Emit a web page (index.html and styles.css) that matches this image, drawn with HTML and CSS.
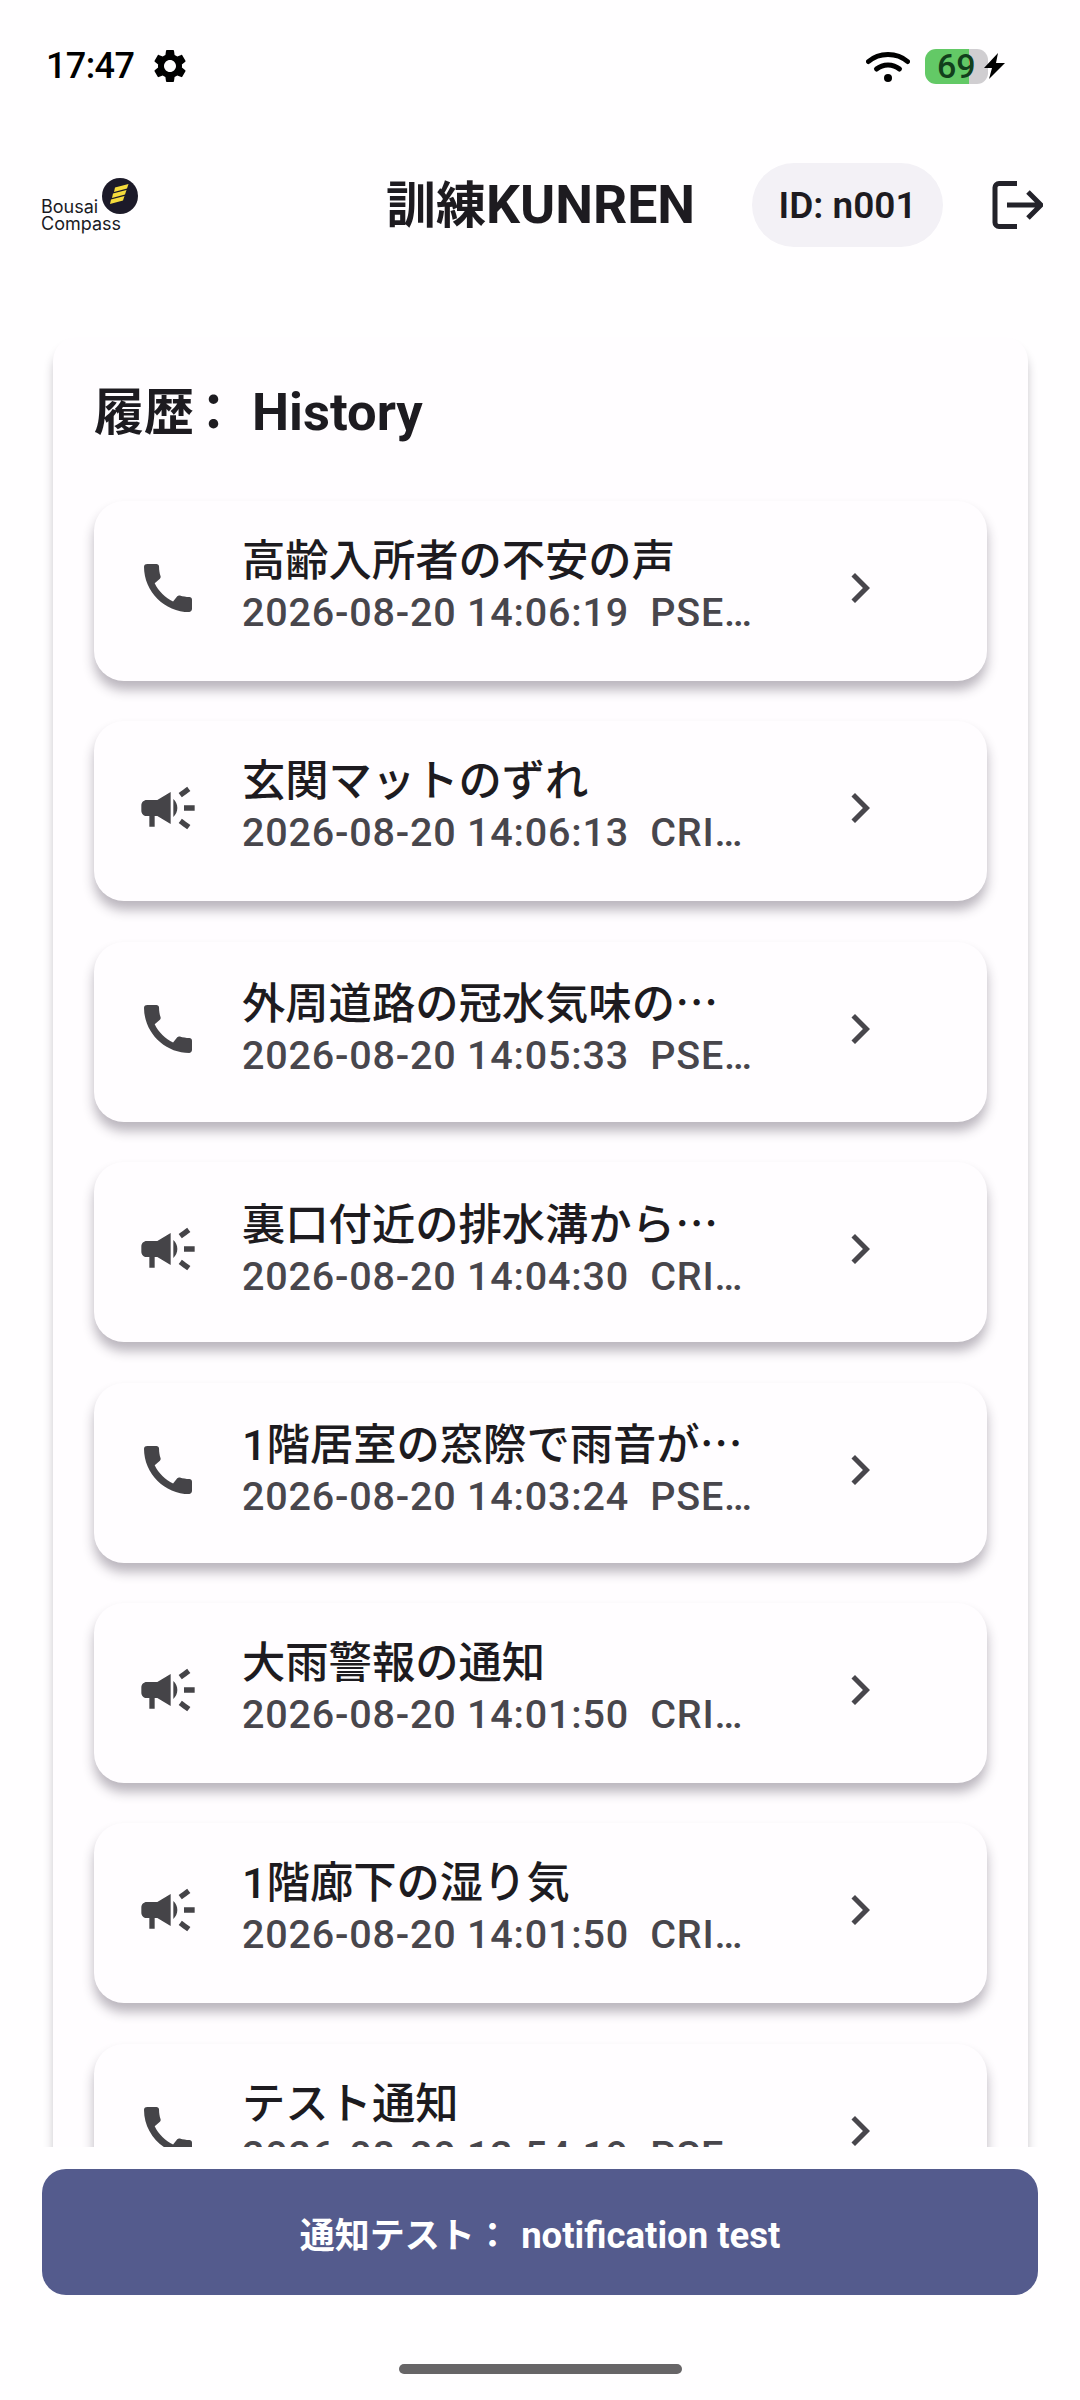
FILE: index.html
```html
<!DOCTYPE html>
<html lang="ja">
<head>
  <meta charset="UTF-8">
  <title>訓練KUNREN</title>
  <link rel="stylesheet" href="styles.css">
</head>
<body>
  <div class="screen">
    <div class="status-bar">
      <div class="status-left">
        <span class="clock">17:47</span>
        <svg class="gear" viewBox="0 0 24 24"><path d="M19.14 12.94c.04-.3.06-.61.06-.94 0-.32-.02-.64-.07-.94l2.03-1.58c.18-.14.23-.41.12-.61l-1.92-3.32c-.12-.22-.37-.29-.59-.22l-2.39.96c-.5-.38-1.03-.7-1.62-.94l-.36-2.54c-.04-.24-.24-.41-.48-.41h-3.84c-.24 0-.43.17-.47.41l-.36 2.54c-.59.24-1.13.57-1.62.94l-2.39-.96c-.22-.08-.47 0-.59.22L2.74 8.87c-.12.21-.08.47.12.61l2.03 1.58c-.05.3-.09.63-.09.94s.02.64.07.94l-2.03 1.58c-.18.14-.23.41-.12.61l1.92 3.32c.12.22.37.29.59.22l2.39-.96c.5.38 1.03.7 1.62.94l.36 2.54c.05.24.24.41.48.41h3.84c.24 0 .44-.17.47-.41l.36-2.54c.59-.24 1.13-.56 1.62-.94l2.39.96c.22.08.47 0 .59-.22l1.92-3.32c.12-.22.07-.47-.12-.61l-2.01-1.58zM12 15.6c-1.98 0-3.6-1.62-3.6-3.6s1.62-3.6 3.6-3.6 3.6 1.62 3.6 3.6-1.62 3.6-3.6 3.6z"/></svg>
      </div>
      <div class="status-right">
        <svg class="wifi" viewBox="0 0 44 32" fill="none" stroke="#000" stroke-width="5" stroke-linecap="round">
          <path d="M2.5 11.5C13 2 31 2 41.5 11.5"/>
          <path d="M10.5 19c6.500-5.500 16.500-5.500 23 0"/>
          <circle cx="22" cy="28" r="4" fill="#000" stroke="none"/>
        </svg>
        <div class="battery"><span class="battery-level">69</span></div>
        <svg class="bolt" viewBox="0 0 21 26"><path d="M14 0 0 15h8L5 26 21 10h-9z"/></svg>
      </div>
    </div>

    <header class="app-header">
      <div class="logo">
        <div class="logo-top">
          <span>Bousai</span>
          <svg class="logo-mark" viewBox="0 0 36 36">
            <circle cx="18" cy="18" r="18" fill="#1c1a29"/>
            <path d="M13 9.500 26.500 6 25 10.500 12 14zM11 15.500 24.500 12 23 16.500 10 20zM9 21.500 22.500 18 21 22.500 8 26z" fill="#f5dc3c"/>
          </svg>
        </div>
        <span class="logo-bottom">Compass</span>
      </div>
      <h1 class="app-title">訓練<span class="latin">KUNREN</span></h1>
      <div class="id-pill">ID: n001</div>
      <svg class="logout" viewBox="0 0 52 48" fill="none" stroke="#23222a" stroke-width="5">
        <path d="M26 2.500H8a4 4 0 0 0-4 4v35a4 4 0 0 0 4 4h18"/>
        <path d="M16 24h33M37 11l13 13-13 13"/>
      </svg>
    </header>

    <main class="scroll-area">
      <section class="history">
        <h2 class="history-title">履歴<span class="colon">：</span><span class="latin">History</span></h2>
        <div class="history-list">
          <div class="item">
            <svg class="item-icon" viewBox="0 0 24 24"><path d="M20.01 15.38c-1.23 0-2.42-.2-3.53-.56-.35-.12-.74-.03-1.01.24l-1.57 1.97c-2.83-1.35-5.48-3.9-6.89-6.83l1.95-1.66c.27-.28.35-.67.24-1.02-.37-1.11-.56-2.3-.56-3.53 0-.54-.45-.99-.99-.99H4.19C3.65 3 3 3.24 3 3.99 3 13.28 10.73 21 20.01 21c.71 0 .99-.63.99-1.18v-3.45c0-.54-.45-.99-.99-.99z"/></svg>
            <div class="item-text">
              <div class="item-title">高齢入所者の不安の声</div>
              <div class="item-sub">2026-08-20 14:06:19  PSE…</div>
            </div>
            <svg class="chevron" viewBox="0 0 24 24"><path d="M10 6 8.590 7.410 13.170 12l-4.580 4.590L10 18l6-6z"/></svg>
          </div>
          <div class="item">
            <svg class="item-icon" viewBox="0 0 24 24"><path d="M18 11v2h4v-2h-4zm-2 6.610c.96.71 2.210 1.650 3.200 2.390.4-.53.8-1.070 1.200-1.600-.99-.74-2.240-1.680-3.200-2.400-.4.54-.8 1.080-1.200 1.610zM20.400 5.600c-.4-.53-.8-1.070-1.200-1.600-.99.74-2.240 1.680-3.200 2.400.4.53.8 1.070 1.200 1.600.96-.72 2.210-1.650 3.200-2.400zM4 9c-1.100 0-2 .9-2 2v2c0 1.100.9 2 2 2h1v4h2v-4h1l5 3V6L8 9H4zm11.500 3c0-1.330-.58-2.530-1.500-3.350v6.690c.92-.81 1.500-2.010 1.500-3.340z"/></svg>
            <div class="item-text">
              <div class="item-title">玄関マットのずれ</div>
              <div class="item-sub">2026-08-20 14:06:13  CRI…</div>
            </div>
            <svg class="chevron" viewBox="0 0 24 24"><path d="M10 6 8.590 7.410 13.170 12l-4.580 4.590L10 18l6-6z"/></svg>
          </div>
          <div class="item">
            <svg class="item-icon" viewBox="0 0 24 24"><path d="M20.01 15.38c-1.23 0-2.42-.2-3.53-.56-.35-.12-.74-.03-1.01.24l-1.57 1.97c-2.83-1.35-5.48-3.9-6.89-6.83l1.95-1.66c.27-.28.35-.67.24-1.02-.37-1.11-.56-2.3-.56-3.53 0-.54-.45-.99-.99-.99H4.19C3.65 3 3 3.24 3 3.99 3 13.28 10.73 21 20.01 21c.71 0 .99-.63.99-1.18v-3.45c0-.54-.45-.99-.99-.99z"/></svg>
            <div class="item-text">
              <div class="item-title">外周道路の冠水気味の<span class="cjk">…</span></div>
              <div class="item-sub">2026-08-20 14:05:33  PSE…</div>
            </div>
            <svg class="chevron" viewBox="0 0 24 24"><path d="M10 6 8.590 7.410 13.170 12l-4.580 4.590L10 18l6-6z"/></svg>
          </div>
          <div class="item">
            <svg class="item-icon" viewBox="0 0 24 24"><path d="M18 11v2h4v-2h-4zm-2 6.610c.96.71 2.210 1.650 3.200 2.390.4-.53.8-1.070 1.200-1.600-.99-.74-2.240-1.680-3.200-2.400-.4.54-.8 1.080-1.200 1.610zM20.400 5.600c-.4-.53-.8-1.070-1.200-1.600-.99.74-2.240 1.680-3.200 2.400.4.53.8 1.070 1.200 1.600.96-.72 2.210-1.650 3.200-2.400zM4 9c-1.100 0-2 .9-2 2v2c0 1.100.9 2 2 2h1v4h2v-4h1l5 3V6L8 9H4zm11.500 3c0-1.330-.58-2.530-1.500-3.350v6.690c.92-.81 1.500-2.010 1.500-3.340z"/></svg>
            <div class="item-text">
              <div class="item-title">裏口付近の排水溝から<span class="cjk">…</span></div>
              <div class="item-sub">2026-08-20 14:04:30  CRI…</div>
            </div>
            <svg class="chevron" viewBox="0 0 24 24"><path d="M10 6 8.590 7.410 13.170 12l-4.580 4.590L10 18l6-6z"/></svg>
          </div>
          <div class="item">
            <svg class="item-icon" viewBox="0 0 24 24"><path d="M20.01 15.38c-1.23 0-2.42-.2-3.53-.56-.35-.12-.74-.03-1.01.24l-1.57 1.97c-2.83-1.35-5.48-3.9-6.89-6.83l1.95-1.66c.27-.28.35-.67.24-1.02-.37-1.11-.56-2.3-.56-3.53 0-.54-.45-.99-.99-.99H4.19C3.65 3 3 3.24 3 3.99 3 13.28 10.73 21 20.01 21c.71 0 .99-.63.99-1.18v-3.45c0-.54-.45-.99-.99-.99z"/></svg>
            <div class="item-text">
              <div class="item-title">1階居室の窓際で雨音が<span class="cjk">…</span></div>
              <div class="item-sub">2026-08-20 14:03:24  PSE…</div>
            </div>
            <svg class="chevron" viewBox="0 0 24 24"><path d="M10 6 8.590 7.410 13.170 12l-4.580 4.590L10 18l6-6z"/></svg>
          </div>
          <div class="item">
            <svg class="item-icon" viewBox="0 0 24 24"><path d="M18 11v2h4v-2h-4zm-2 6.610c.96.71 2.210 1.650 3.200 2.390.4-.53.8-1.070 1.200-1.600-.99-.74-2.240-1.680-3.200-2.400-.4.54-.8 1.080-1.200 1.610zM20.400 5.600c-.4-.53-.8-1.070-1.200-1.600-.99.74-2.240 1.680-3.200 2.400.4.53.8 1.070 1.200 1.600.96-.72 2.210-1.650 3.200-2.400zM4 9c-1.100 0-2 .9-2 2v2c0 1.100.9 2 2 2h1v4h2v-4h1l5 3V6L8 9H4zm11.500 3c0-1.330-.58-2.530-1.500-3.350v6.690c.92-.81 1.500-2.010 1.500-3.340z"/></svg>
            <div class="item-text">
              <div class="item-title">大雨警報の通知</div>
              <div class="item-sub">2026-08-20 14:01:50  CRI…</div>
            </div>
            <svg class="chevron" viewBox="0 0 24 24"><path d="M10 6 8.590 7.410 13.170 12l-4.580 4.590L10 18l6-6z"/></svg>
          </div>
          <div class="item">
            <svg class="item-icon" viewBox="0 0 24 24"><path d="M18 11v2h4v-2h-4zm-2 6.610c.96.71 2.210 1.650 3.200 2.390.4-.53.8-1.070 1.200-1.600-.99-.74-2.240-1.680-3.200-2.400-.4.54-.8 1.080-1.200 1.610zM20.400 5.600c-.4-.53-.8-1.070-1.200-1.600-.99.74-2.240 1.680-3.200 2.400.4.53.8 1.070 1.200 1.600.96-.72 2.210-1.650 3.200-2.400zM4 9c-1.100 0-2 .9-2 2v2c0 1.100.9 2 2 2h1v4h2v-4h1l5 3V6L8 9H4zm11.500 3c0-1.330-.58-2.530-1.500-3.350v6.690c.92-.81 1.500-2.010 1.500-3.340z"/></svg>
            <div class="item-text">
              <div class="item-title">1階廊下の湿り気</div>
              <div class="item-sub">2026-08-20 14:01:50  CRI…</div>
            </div>
            <svg class="chevron" viewBox="0 0 24 24"><path d="M10 6 8.590 7.410 13.170 12l-4.580 4.590L10 18l6-6z"/></svg>
          </div>
          <div class="item">
            <svg class="item-icon" viewBox="0 0 24 24"><path d="M20.01 15.38c-1.23 0-2.42-.2-3.53-.56-.35-.12-.74-.03-1.01.24l-1.57 1.97c-2.83-1.35-5.48-3.9-6.89-6.83l1.95-1.66c.27-.28.35-.67.24-1.02-.37-1.11-.56-2.3-.56-3.53 0-.54-.45-.99-.99-.99H4.19C3.65 3 3 3.24 3 3.99 3 13.28 10.73 21 20.01 21c.71 0 .99-.63.99-1.18v-3.45c0-.54-.45-.99-.99-.99z"/></svg>
            <div class="item-text">
              <div class="item-title">テスト通知</div>
              <div class="item-sub">2026-08-20 13:54:19  PSE…</div>
            </div>
            <svg class="chevron" viewBox="0 0 24 24"><path d="M10 6 8.590 7.410 13.170 12l-4.580 4.590L10 18l6-6z"/></svg>
          </div>
        </div>
      </section>
    </main>

    <footer class="app-footer">
      <button class="test-button">通知テスト<span class="colon">：</span><span class="latin">notification test</span></button>
    </footer>
    <div class="home-bar"></div>
  </div>
</body>
</html>
```

FILE: styles.css
```css
* {
  box-sizing: border-box;
}
body {
  margin: 0;
  background: #fffeff;
  font-family: Roboto, "Noto Sans CJK JP", sans-serif;
  color: #1d1b20;
}
.screen {
  width: 1080px;
  height: 2400px;
  display: flex;
  flex-direction: column;
  overflow: hidden;
}
.cjk {
  font-family: "Noto Sans CJK JP", sans-serif;
}
.colon {
  font-feature-settings: "palt";
}

/* status bar */
.status-bar {
  height: 132px;
  flex: none;
  display: flex;
  justify-content: space-between;
  padding: 48px 75px 0 46px;
}
.status-left {
  display: flex;
  align-items: center;
  gap: 16px;
  height: 36px;
}
.clock {
  font-size: 36px;
  font-weight: 500;
  letter-spacing: -0.6px;
  color: #000;
}
.gear {
  width: 40px;
  height: 40px;
}
.status-right {
  display: flex;
  align-items: center;
  height: 36px;
}
.wifi {
  width: 44px;
  height: 32px;
  margin-right: 15px;
}
.battery {
  width: 63px;
  height: 35px;
  border-radius: 11px;
  background: linear-gradient(90deg, #63c966 70%, #d0ced1 70%);
  display: flex;
  align-items: center;
  padding-left: 12px;
}
.battery-level {
  font-size: 34px;
  font-weight: 500;
  color: #123f1c;
  line-height: 1;
}
.bolt {
  width: 21px;
  height: 26px;
  margin-left: -4px;
}

/* header */
.app-header {
  height: 146px;
  flex: none;
  display: flex;
  align-items: center;
  padding: 0 37px 0 41px;
}
.logo {
  width: 100px;
  display: flex;
  flex-direction: column;
  font-family: Inter, sans-serif;
  font-size: 18px;
  line-height: 17px;
  color: #1a1a1f;
  margin-top: 18px;
}
.logo-top {
  display: flex;
  align-items: flex-end;
  margin-top: -18px;
}
.logo-mark {
  width: 36px;
  height: 36px;
  margin: 0 0 1px 4px;
}
.app-title {
  margin: 0 0 0 245px;
  font-size: 50px;
  font-weight: 700;
  line-height: 60px;
  white-space: nowrap;
}
.app-title .latin {
  font-size: 53.5px;
}
.id-pill {
  width: 191px;
  height: 84px;
  margin-left: 57px;
  border-radius: 42px;
  background: #f3f1f6;
  display: flex;
  align-items: center;
  justify-content: center;
  font-size: 37px;
  font-weight: 600;
}
.logout {
  width: 52px;
  height: 48px;
  margin-left: 48px;
}

/* history list */
.scroll-area {
  flex: 1;
  overflow: hidden;
  padding: 59px 52px 0 53px;
}
.history {
  background: #fffdff;
  border-radius: 24px 24px 0 0;
  padding: 44px 41px 60px;
  box-shadow: 0 10px 10px rgba(40, 30, 50, 0.25);
}
.history-title {
  margin: 0 0 57px;
  font-size: 50px;
  font-weight: 700;
  line-height: 62px;
}
.history-title .latin {
  font-size: 52.5px;
}
.history-title .colon {
  margin: 0 26px 0 7px;
}
.history-list {
  display: flex;
  flex-direction: column;
  gap: 40.4px;
}
.item {
  height: 180px;
  border-radius: 30px;
  background: #fffdff;
  box-shadow: 0 9px 12px rgba(40, 30, 50, 0.32);
  display: flex;
  align-items: center;
  padding: 0 0 6px 42px;
}
.item-icon {
  width: 64px;
  height: 64px;
  flex: none;
  fill: #454448;
}
.item-text {
  width: 570px;
  margin-left: 42px;
  margin-top: -7px;
}
.item-title {
  font-size: 43.3px;
  font-weight: 500;
  line-height: 56px;
  white-space: nowrap;
}
.item-sub {
  font-size: 39.5px;
  font-weight: 500;
  line-height: 45px;
  letter-spacing: 0.8px;
  color: #48464c;
  white-space: pre;
}
.chevron {
  width: 60px;
  height: 60px;
  flex: none;
  margin-left: 18px;
  fill: #48464c;
}

/* bottom */
.app-footer {
  height: 253px;
  flex: none;
  padding: 22px 42px 0;
  background: #fffeff;
  position: relative;
}
.test-button {
  width: 100%;
  height: 126px;
  border: none;
  border-radius: 24px;
  background: #545b8d;
  color: #fff;
  font-family: Roboto, "Noto Sans CJK JP", sans-serif;
  font-size: 35px;
  font-weight: 700;
}
.test-button .latin {
  font-size: 36.5px;
}
.test-button .colon {
  margin: 0 20px 0 9px;
}
.home-bar {
  position: absolute;
  left: 399px;
  top: 2364px;
  width: 283px;
  height: 10px;
  border-radius: 5px;
  background: #676567;
}
```
